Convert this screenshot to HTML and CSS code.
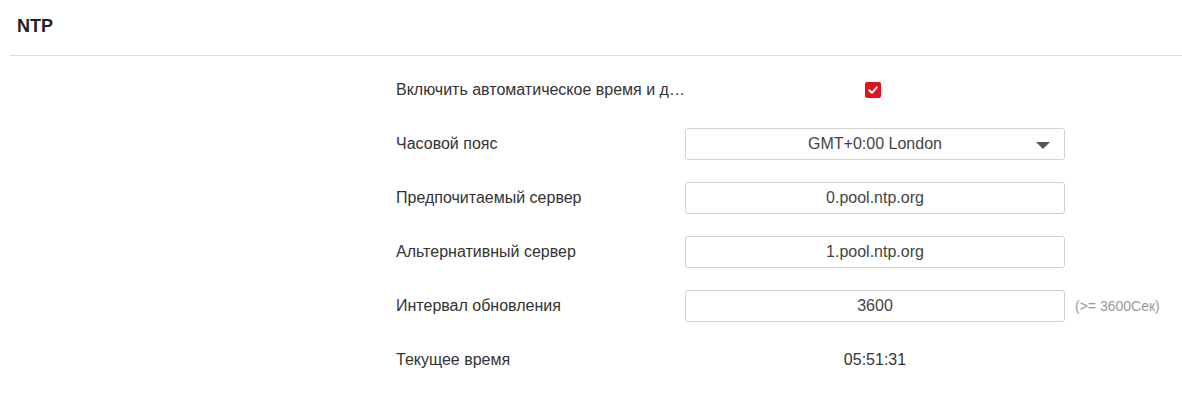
FILE: index.html
```html
<!DOCTYPE html>
<html lang="ru">
<head>
<meta charset="utf-8">
<link rel="stylesheet" href="styles.css">
</head>
<body>
<div class="page">
  <div class="head"><span class="title">NTP</span></div>
  <div class="form">
    <div class="row">
      <div class="label">Включить автоматическое время и дату</div>
      <div class="field center"><span class="check"><svg width="16" height="16" viewBox="0 0 16 16"><rect x="0" y="0" width="16" height="16" rx="2" fill="#e1131f"/><path d="M4.2 8.2 L7 10.8 L11.8 5.4" stroke="#fff" stroke-width="2" fill="none" stroke-linecap="round" stroke-linejoin="round"/></svg></span></div>
    </div>
    <div class="row">
      <div class="label">Часовой пояс</div>
      <div class="field"><div class="box select">GMT+0:00 London<span class="arrow"></span></div></div>
    </div>
    <div class="row">
      <div class="label">Предпочитаемый сервер</div>
      <div class="field"><div class="box">0.pool.ntp.org</div></div>
    </div>
    <div class="row">
      <div class="label">Альтернативный сервер</div>
      <div class="field"><div class="box">1.pool.ntp.org</div></div>
    </div>
    <div class="row">
      <div class="label">Интервал обновления</div>
      <div class="field"><div class="box">3600</div></div>
      <div class="hint">(&gt;= 3600Сек)</div>
    </div>
    <div class="row">
      <div class="label">Текущее время</div>
      <div class="field center">05:51:31</div>
    </div>
  </div>
</div>
</body>
</html>
```
FILE: styles.css
```css
* { box-sizing: border-box; }
html, body { margin: 0; padding: 0; background: #fff; }
body { font-family: "Liberation Sans", Arial, sans-serif; font-size: 16px; color: #333; }
.head { height: 56px; margin-left: 10px; border-bottom: 1px solid #dcdcdc; display: flex; align-items: center; padding-left: 7px; padding-bottom: 2px; }
.title { font-weight: bold; font-size: 18px; color: #222; }
.form { margin-top: 7px; padding-left: 396px; }
.row { height: 54px; display: flex; align-items: center; }
.label { width: 289px; white-space: nowrap; overflow: hidden; text-overflow: ellipsis; color: #333; }
.field { width: 380px; }
.field.center { display: flex; justify-content: center; }
.check { display: block; width: 16px; height: 16px; margin-left: -4px; }
.check svg { display: block; }
.box { height: 32px; border: 1px solid #d3d3d3; border-radius: 3px; display: flex; align-items: center; justify-content: center; color: #444; position: relative; }
.arrow { position: absolute; right: 14px; top: 13px; width: 0; height: 0; border-left: 7px solid transparent; border-right: 7px solid transparent; border-top: 7px solid #555; }
.hint { margin-left: 10px; font-size: 14px; color: #999; }
```
